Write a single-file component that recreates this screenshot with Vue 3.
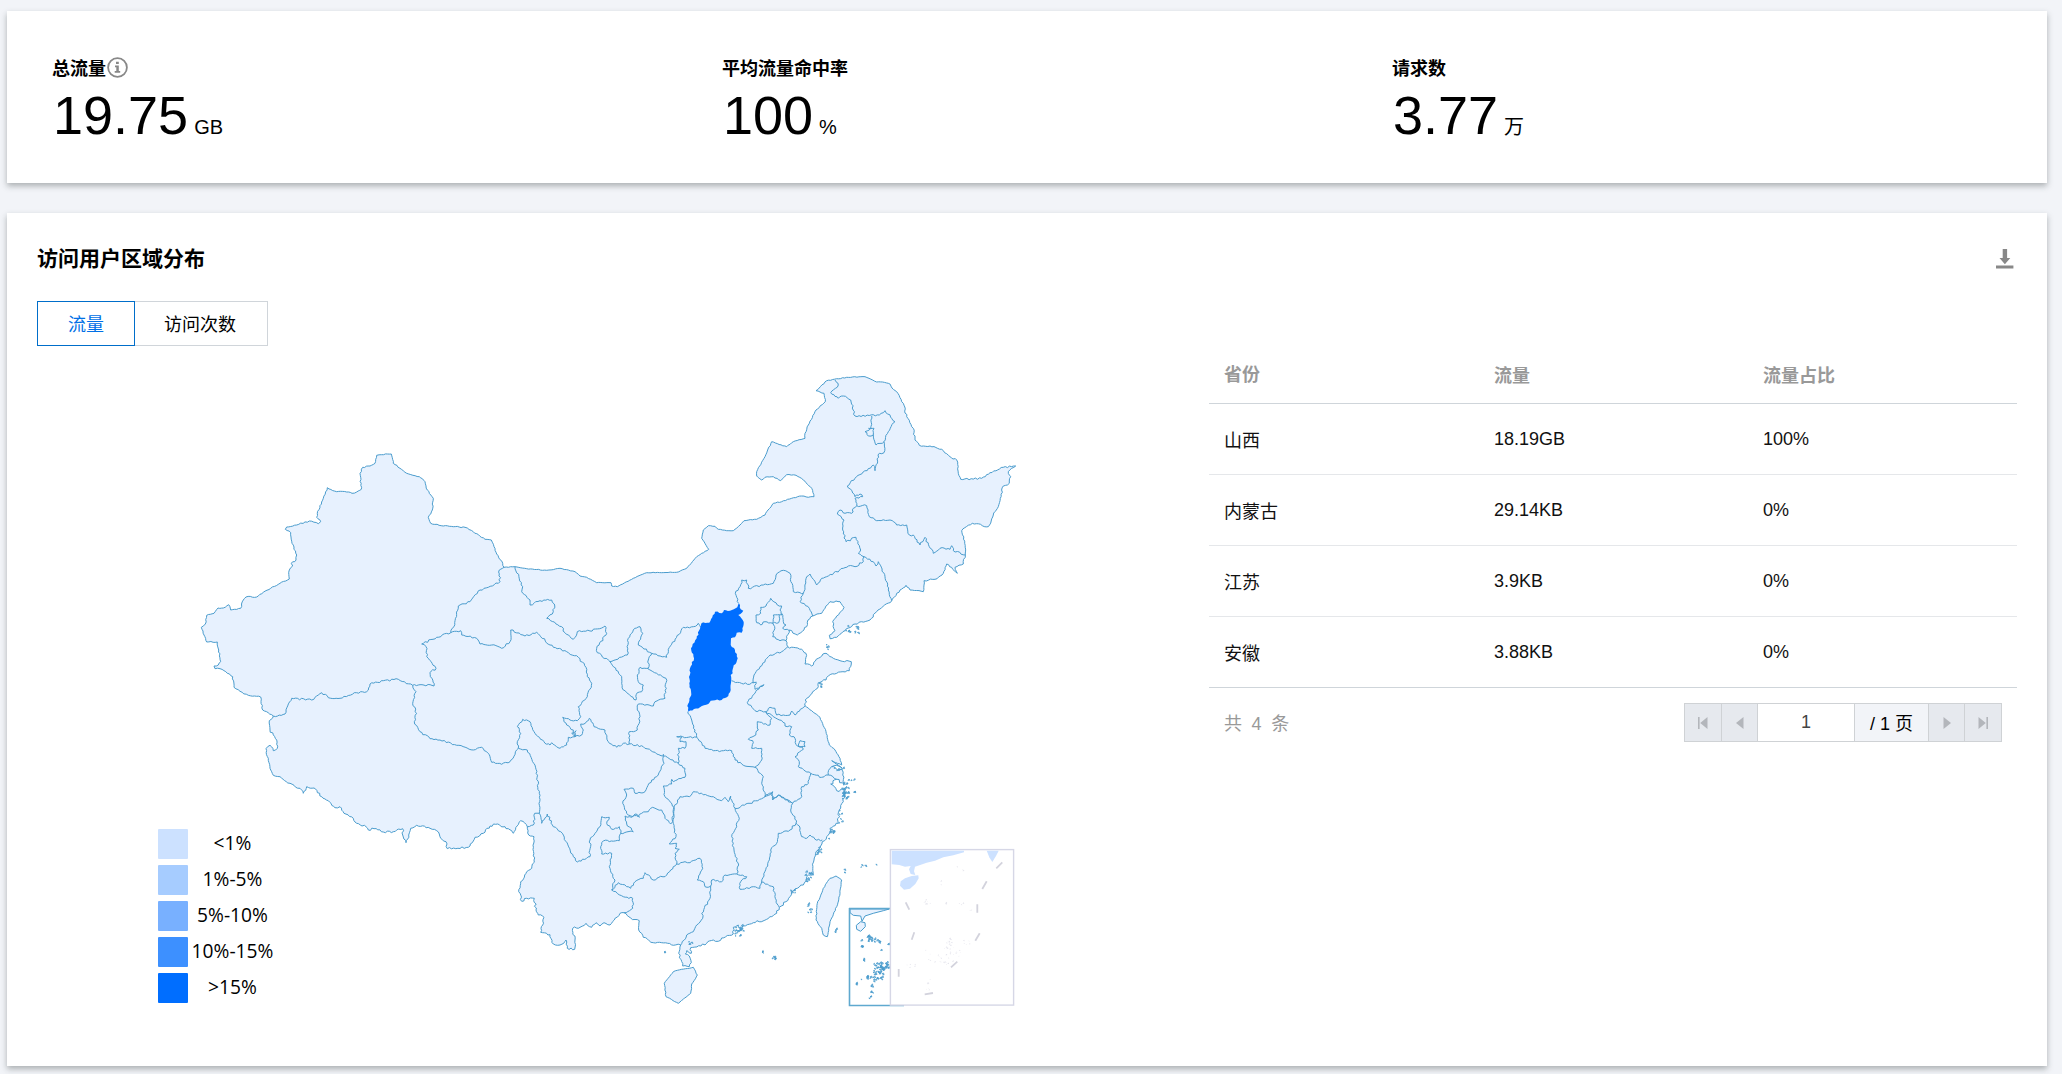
<script setup>
const stats = [
  { label: '总流量', value: '19.75', unit: 'GB', info: true },
  { label: '平均流量命中率', value: '100', unit: '%' },
  { label: '请求数', value: '3.77', unit: '万' },
]

const rows = [
  ['山西', '18.19GB', '100%'],
  ['内蒙古', '29.14KB', '0%'],
  ['江苏', '3.9KB', '0%'],
  ['安徽', '3.88KB', '0%'],
]

const legend = [
  { label: '<1%', cls: 'l1' },
  { label: '1%-5%', cls: 'l2' },
  { label: '5%-10%', cls: 'l3' },
  { label: '10%-15%', cls: 'l4' },
  { label: '>15%', cls: 'l5' },
]

// Map sheets: origin of each sheet on the canvas, three sheet units per pixel.
const sheets = {
  W: [190, 430],
  N: [500, 430],
  NE: [740, 360],
  S: [500, 680],
  E: [740, 620],
}

function points(sheet, text) {
  const [ox, oy] = sheets[sheet]
  return text.trim().split(/\s+/).map((p) => {
    const [x, y] = p.split(',').map(Number)
    return [ox + x / 3, oy + y / 3]
  })
}

let seed = 7
function rand() {
  seed = (seed * 16807) % 2147483647
  return seed / 2147483647
}

// Adds small irregularities between surveyed points.
function rough(pts, amount) {
  const out = [pts[0]]
  for (let i = 1; i < pts.length; i++) {
    const [ax, ay] = pts[i - 1]
    const [bx, by] = pts[i]
    const len = Math.hypot(bx - ax, by - ay)
    const n = Math.max(1, Math.round(len / 2.1))
    for (let k = 1; k < n; k++) {
      const t = k / n
      const d = (rand() - 0.5) * 2 * amount
      out.push([ax + (bx - ax) * t - ((by - ay) / len) * d, ay + (by - ay) * t + ((bx - ax) / len) * d])
    }
    out.push([bx, by])
  }
  return out
}

function path(pts, close) {
  return 'M' + pts.map(([x, y]) => x.toFixed(1) + ' ' + y.toFixed(1)).join('L') + (close ? 'Z' : '')
}

const coast = [
  ['W', 0.6, '942,412 938,400 920,372 912,350 904,330 885,328 850,305 825,292 790,290 760,288 722,280 715,262 727,240 730,205 712,180 705,155 688,140 650,130 630,115 610,100 604,72 575,74 560,76 555,100 540,108 518,112 510,130 514,178 500,186 486,190 470,186 440,185 412,173 400,205 382,250 380,262 392,275 385,281 358,273 320,285 290,291 286,298 302,308 306,340 320,375 318,390 304,400 308,408 298,420 298,447 270,460 220,487 200,501 168,501 160,510 152,535 122,540 116,524 100,534 84,534 72,550 50,556 46,582 34,592 42,615 50,636 82,636 86,660 92,695 85,705 72,708 75,716 90,716 112,730 128,740 132,772 150,784 175,796 212,801 218,840 250,858'],
  ['W', 1, '250,858 238,872 240,900 256,925 262,955 250,962 240,946 228,956 235,985 240,1015 250,1036 270,1040 300,1060 330,1075 340,1090 350,1070 372,1074 395,1100 415,1112 435,1133 450,1130 462,1150 490,1165 500,1180 528,1190 535,1200 552,1196 580,1206 610,1205 638,1196 638,1215 648,1238 656,1215 662,1195 680,1186 720,1195 740,1202 748,1212 752,1225 768,1235 772,1256 835,1252 855,1222 880,1210 900,1188 917,1183 945,1190 968,1208'],
  ['S', 1.1, '40,460 62,422 82,440 86,465 102,470 102,540 95,565 80,575 62,605 56,635 65,664 80,655 103,655 108,690 115,705 132,712 128,735 122,757 150,764 160,792 180,795 198,780 202,805 224,808 225,780 218,745 240,742 258,730 275,742 288,728 300,738 312,728 330,735 360,700 372,698 392,714 418,722 416,750 430,772 460,788 485,788 520,796 542,795 536,820 548,858 568,860 574,848 568,828 556,822 560,812 574,820 572,803 620,790 640,780 655,784 665,774 700,762 700,742 715,735 722,750 730,738 760,728 800,718 830,700 838,682'],
  ['E', 1.3, '118,862 150,830 160,812 190,795 200,770 218,765 222,720 228,695 240,685 247,665 265,645 270,625 295,610 298,570 310,545 315,520 310,508 290,512 272,492 290,478 312,492 308,465 308,452 275,440'],
  ['E', 0.4, '275,440 290,436 306,444 275,422 305,435 300,415 285,390 268,375 258,335 240,292 215,272 195,257'],
  ['E', 1, '195,257 200,235 218,215 235,200 235,188 258,180 265,168 290,160 328,152 334,125 300,122 280,115 255,100 235,115 215,138 195,132 198,100 185,88 143,80'],
  ['NE', 0.8, '143,860 138,842 148,810 172,825 200,800 204,780 218,768 245,760 270,725 300,725 312,742 290,768 278,785 285,812 268,826 270,836 290,832 315,812 345,792 390,780 410,755 455,722 480,690 498,676 510,690 550,695 552,662 585,658 610,640 620,612 638,628 652,640 645,622 670,612 676,585 674,550 665,512 697,490 745,500 760,465 775,440 790,378 808,370 812,350 805,335 815,325 827,318 790,322 750,338 725,355 662,358 655,340 650,300 630,290 605,268 570,258 538,256 525,240 520,205 500,170 490,130 470,95 445,70 410,66'],
  ['NE', 0.4, '410,66 375,50 320,52 260,62 228,92 252,100 256,125 228,150 205,195 195,220 195,235 160,245 140,260 95,245 75,290 50,335 50,348 65,360 75,352 100,350 122,362 140,344 168,346 190,360 215,385 222,410 205,412 185,408 155,415 125,425 100,430 80,455 75,465 50,478 12,482 0,495'],
  ['N', 0.3, '720,285 700,302 680,302 655,298 645,289 625,287 610,300 605,325 626,358 590,380 560,415 530,427 440,428 400,445 352,470 335,468 333,458 290,458 260,442 240,438 225,425 180,415 140,421 80,416 45,410 12,412'],
]

const mainland = path(coast.flatMap(([s, a, t]) => rough(points(s, t), a)), true)

const borders = [
  ['W', '942,412 928,420 930,455 895,472 870,480 840,515 805,528 792,590 782,608'],
  ['W', '782,608 740,622 695,642 708,650 710,680 738,715 720,728 732,768 690,764 668,766'],
  ['W', '668,766 625,748 580,752 540,762 530,785 500,788 450,805 415,803 395,788 365,810 305,805 285,852 250,858'],
  ['W', '668,766 678,785 668,820 680,850 673,875 690,905 720,926 750,930 800,946 850,960 875,952 900,980 905,997 935,1003 960,995 985,955'],
  ['W', '782,608 812,602 815,615 860,625 870,642 905,645 935,655 960,635 962,600'],
  ['S', '55,205 82,210 108,268 118,340 118,400 104,400 100,435 82,440'],
  ['N', '32,600 75,618 110,607 150,645 200,665 235,682 258,712 262,740 275,760 262,800 235,830 242,860'],
  ['S', '242,110 232,122 210,120 188,112 200,135 220,150 225,170'],
  ['S', '55,205 52,185 62,160 52,140 68,118 90,125 105,160 135,190 150,195 155,188 180,205 200,195 205,172 225,170'],
  ['S', '225,170 215,160 228,152 225,170 245,165 250,150 242,132 256,130 268,115 282,140 315,150 325,185 350,202 370,190 388,192'],
  ['N', '45,410 68,470 65,485 90,510 90,525 120,512 155,510 163,522 160,545 140,565 185,590 195,608 220,628 232,605 270,603 315,588 320,610 290,655 292,668 330,695'],
  ['N', '330,695 382,675 385,625 400,600 420,590 428,610 415,645 455,670 445,690 445,715 420,712 412,735 415,755 430,765 425,785 412,788 408,810 370,780 365,740 330,695'],
  ['N', '455,670 500,682 505,658 550,592 580,590 595,580 602,592 610,578'],
  ['N', '442,715 470,730 498,745 495,805 465,815 460,828 415,822'],
  ['S', '415,72 412,90 420,110 412,150 388,155 388,192 430,200 470,222 490,228 535,250'],
  ['S', '490,222 492,250 470,290 455,300 435,335 405,340 400,325 372,328 380,345 368,370 385,405 415,410'],
  ['S', '535,250 555,265 555,292 520,305 515,298 515,312 490,318 495,350 522,382'],
  ['S', '415,410 425,400 445,395 458,382 485,390 495,415 512,432 518,425 522,382'],
  ['S', '420,412 405,402 395,412 375,408 380,432 400,455 362,460'],
  ['S', '118,400 125,430 142,402 160,440 182,455 220,530 232,546 270,530 270,480 300,440 305,410 328,412 320,430 335,448 358,440 362,460'],
  ['S', '362,460 358,482 310,483 302,500 305,522 335,520 328,560 345,600 335,630'],
  ['S', '335,630 355,608 392,625 405,605 430,595 435,578 460,600 500,585 530,552'],
  ['S', '335,630 370,650 398,655 398,685 372,698'],
  ['S', '522,382 520,430 528,470 508,492 530,490 525,505 538,508 525,520 530,552'],
  ['S', '530,552 555,545 570,548 600,535 608,565 592,600 610,605 615,620 632,618'],
  ['S', '632,618 630,655 605,700 608,715 590,735 580,755 560,765 542,795'],
  ['S', '632,618 635,600 665,605 675,585 710,582'],
  ['S', '710,582 716,555 702,510 695,470 718,415 705,385'],
  ['S', '522,382 540,350 568,350 580,335 640,350 665,362 675,352 685,365 692,348 705,385'],
  ['S', '705,385 750,370 795,350 815,338 818,360 835,345 878,370'],
  ['S', '710,582 740,590 722,605 720,628 760,620 780,625 785,606 805,545 812,510 830,490 835,460 870,450 888,430'],
  ['S', '785,606 820,620 826,655 838,682'],
  ['S', '535,250 535,205 555,205 558,185 540,185 545,172 530,170 590,172 585,150 575,120 563,95'],
  ['S', '590,172 615,205 640,212 695,212 705,240 735,258 765,262 790,290 785,310 795,350'],
  ['S', '765,262 785,240 785,205 755,205 758,182 745,178 762,168 775,150 772,125 810,135 815,115 797,95'],
  ['S', '797,95 765,92 742,68 765,40 770,30 792,14 765,28 768,5'],
  ['N', '695,752 730,762 768,758'],
  ['E', '143,80 125,95 90,105 60,140 42,165 40,190'],
  ['E', '77,275 90,262 105,265 110,285 150,285 155,273 165,285 195,257'],
  ['E', '77,275 100,290 135,310 135,318 155,320 148,345 162,350 172,378 195,380 195,365 180,362 175,375 190,388 165,410 178,425 175,440 212,460'],
  ['E', '212,460 205,490 185,500 185,530 158,550 152,570 165,590 168,610'],
  ['E', '75,530 88,520 98,515 100,538 115,525 158,550'],
  ['E', '212,460 245,472 265,465 290,478'],
  ['E', '265,465 270,445 275,440'],
  ['E', '168,610 178,618 185,650 200,655 210,645 225,658 247,660'],
  ['N', '716,520 706,490 720,470 725,450 740,450 745,475 790,465 820,460 828,435 850,421 870,430 880,485 900,488'],
  ['NE', '180,698 190,700 180,725 208,745 218,768'],
  ['NE', '190,700 200,650 210,642 230,675 245,655 260,650 310,625 325,618 345,620 370,605 372,590'],
  ['NE', '372,590 355,580 362,570 348,532 318,545 308,510 312,480 292,462 300,450 315,460 335,460 340,445 350,437'],
  ['NE', '372,590 400,605 408,618 415,605 435,650 445,690 455,722'],
  ['NE', '350,437 380,437 388,470 410,482 450,480 470,495 500,495 508,525 520,525 540,555 555,532 568,560 580,580 600,565 630,568 635,557 640,572 676,585'],
  ['NE', '350,437 345,415 368,410 360,402 345,410 322,378 345,355 400,315 405,332 418,280 432,278 432,245 445,215 465,185 435,152 418,165 345,168 332,120 310,108 295,115 272,98 295,75 285,60'],
  ['NE', '395,168 392,205 375,215 385,228 400,225 402,205 385,205'],
  ['NE', '400,225 408,255 432,245'],
  ['NE', '92,715 112,735 125,738 120,750 125,765 100,765 98,790 75,785 62,795 50,788 48,765 62,760 62,742 78,738 92,715'],
  ['NE', '125,760 130,785 138,795 128,805 148,812'],
  ['NE', '98,790 104,800 98,830 120,842 138,842'],
  ['NE', '118,765 116,788 98,790'],
].map(([s, t]) => path(rough(points(s, t), 0.95)))

const shanxi = path(rough(points('N', '716,520 722,538 730,542 715,555 728,570 731,582 725,608 710,608 705,622 693,625 692,645 705,660 713,685 700,712 698,730 692,735 692,780 685,798 665,810 632,812 625,822 600,832 565,845 562,828 574,795 568,760 570,715 582,685 573,655 590,625 605,580 628,578 645,545 665,550 672,540 690,542 712,532'), 0.7), true)

const islands = [
  ['S', '520,875 545,868 580,862 592,885 575,912 572,940 550,958 535,970 498,950 493,910 520,875'],
  ['E', '288,768 305,780 300,820 290,860 270,905 262,950 250,945 245,925 228,900 232,850 250,805 270,775 288,768'],
].map(([s, t]) => path(rough(points(s, t), 0.4), true))

const insetLand = path(points('E', '330,867 448,867 430,872 400,880 375,888 366,904 362,888 340,886 330,878'), true)
const insetIsle = path(points('E', '362,905 375,908 376,920 362,934 350,928 349,916'), true)

// Small islets: centre, spread and count in sheet E units.
const islets = [
  [313, 515, 11, 24, 30], [300, 590, 6, 20, 6], [272, 640, 8, 18, 8], [232, 695, 10, 12, 8], [205, 770, 12, 14, 12],
  [158, 815, 9, 5, 6], [208, 865, 6, 14, 6], [287, 925, 3, 22, 3], [332, 482, 9, 3, 3], [342, 518, 3, 4, 2],
  [259, 80, 4, 12, 4], [335, 28, 20, 12, 12], [368, 740, 8, 6, 3], [407, 735, 2, 3, 1], [310, 755, 3, 8, 2],
  [-5, 928, 14, 12, 14], [-8, 945, 10, 4, 4], [-150, 968, 6, 5, 4], [67, 997, 3, 4, 3], [100, 1014, 5, 5, 6], [-226, 996, 2, 3, 2],
  [240, 195, 6, 7, 4], [295, 448, 14, 6, 6],
  [388, 956, 9, 8, 14], [410, 965, 10, 6, 6], [444, 974, 3, 3, 2], [421, 990, 2, 2, 1], [413, 1055, 14, 28, 50], [435, 1040, 10, 12, 14],
  [376, 1072, 16, 6, 9], [392, 1108, 5, 12, 6], [389, 1132, 4, 3, 3], [363, 973, 3, 10, 5], [369, 1020, 2, 7, 3], [348, 1092, 2, 7, 3],
]
function scatter(list, size) {
  return list.flatMap(([cx, cy, rx, ry, n]) =>
    Array.from({ length: n }, () => {
      const x = 740 + (cx + (rand() * 2 - 1) * rx) / 3
      const y = 620 + (cy + (rand() * 2 - 1) * ry) / 3
      const a = size * (0.6 + rand())
      return `M${x.toFixed(1)} ${y.toFixed(1)}l${a.toFixed(1)} ${(-a * rand() * 1.5).toFixed(1)}l${(a * 0.3).toFixed(1)} ${a.toFixed(1)}z`
    })
  ).join('')
}
const isletPath = scatter(islets, 1.1)

const faintPath = scatter([
  [560, 846, 10, 8, 9], [615, 853, 8, 4, 4], [662, 852, 8, 3, 4], [690, 870, 4, 3, 3], [652, 742, 3, 3, 3],
  [620, 965, 16, 14, 10], [635, 995, 25, 15, 14], [680, 968, 12, 6, 5], [600, 1010, 45, 18, 14], [510, 1036, 14, 6, 5],
  [612, 1030, 10, 5, 6], [568, 1085, 8, 8, 4], [562, 1110, 5, 5, 3], [668, 750, 3, 5, 2], [602, 785, 3, 12, 2],
], 1)

const panelLand = path(points('E', '455,692 672,692 672,697 640,706 610,712 585,722 560,728 525,740 522,754 526,765 512,762 507,748 512,738 495,740 478,735 455,733'), true)
const panelIsle = path(points('E', '495,775 515,768 535,766 536,775 526,792 510,806 492,809 480,797 482,784'), true)
const panelTaiwan = path(points('E', '740,692 776,692 768,708 757,726 748,712'), true)
const dashes = [
  '769,745 787,727', '727,807 740,784', '712,853 712,878', '706,962 719,940', '633,1042 652,1025',
  '554,1123 579,1119', '476,1047 476,1070', '515,959 523,937', '497,847 508,869',
].map((t) => path(points('E', t))).join('')
</script>

<template>
  <main class="page">
    <section class="card stats">
      <div v-for="s in stats" :key="s.label" class="stat">
        <div class="stat-label">
          {{ s.label }}
          <svg v-if="s.info" class="info" viewBox="0 0 21 21">
            <circle cx="10.5" cy="10.5" r="9.4" fill="none" stroke="#888" stroke-width="1.8" />
            <path d="M9 4.7h2.8v2.2H9zM8 8.6h3.8v5.4h1.4v1.7H7.7V14H9.3v-3.8H8z" fill="#888" />
          </svg>
        </div>
        <div class="stat-value">{{ s.value }}<span class="unit">{{ s.unit }}</span></div>
      </div>
    </section>

    <section class="card region">
      <header class="head">
        <h2>访问用户区域分布</h2>
        <svg class="download" viewBox="0 0 18 20">
          <path d="M6.7 0h4.4v9h3.2L8.9 15.2 3.5 9h3.2zM0 16.4h17.4v3.2H0z" fill="#888" />
        </svg>
      </header>
      <div class="tabs">
        <button class="tab active">流量</button>
        <button class="tab second">访问次数</button>
      </div>

      <div class="body">
        <div class="map-box">
          <svg class="map" viewBox="37 346 1100 700">
            <g class="land">
              <path :d="mainland" />
              <path v-for="(d, i) in islands" :key="'i' + i" :d="d" />
              <path :d="insetLand" />
              <path :d="insetIsle" />
            </g>
            <path v-for="(d, i) in borders" :key="i" :d="d" class="border" />
            <path :d="isletPath" class="islets" />
            <path :d="shanxi" class="hot" />
            <path d="M849 908.5H892M849.5 908V1005.5H904" class="inset" />
            <rect x="890.4" y="849.6" width="123.2" height="155.5" class="panel" />
            <g fill="#cce1ff">
              <path :d="panelLand" />
              <path :d="panelIsle" />
              <path :d="panelTaiwan" />
            </g>
            <path :d="faintPath" fill="#e4e4ec" />
            <path :d="dashes" class="dash" />
          </svg>
          <ul class="legend">
            <li v-for="l in legend" :key="l.label"><i :class="l.cls"></i><span>{{ l.label }}</span></li>
          </ul>
        </div>

        <div class="table-box">
          <div class="row th"><span>省份</span><span>流量</span><span>流量占比</span></div>
          <div v-for="r in rows" :key="r[0]" class="row">
            <span v-for="(c, i) in r" :key="i">{{ c }}</span>
          </div>
          <div class="foot">
            <span class="total">共 4 条</span>
            <div class="pager">
              <span class="pg btn"><svg viewBox="0 0 12 12"><path d="M1 0h1.6v12H1zM10.5 0v12L3.2 6z" /></svg></span>
              <span class="pg btn"><svg viewBox="0 0 12 12"><path d="M9.5 0v12L2 6z" /></svg></span>
              <span class="pg num">1</span>
              <span class="pg of">/ 1 页</span>
              <span class="pg btn"><svg viewBox="0 0 12 12"><path d="M2.5 0v12L10 6z" /></svg></span>
              <span class="pg btn"><svg viewBox="0 0 12 12"><path d="M9.4 0H11v12H9.4zM1.5 0v12L8.8 6z" /></svg></span>
            </div>
          </div>
        </div>
      </div>
    </section>
  </main>
</template>

<style>
body {
  background: #f2f4f8;
}
</style>

<style scoped>
* {
  box-sizing: border-box;
}
.page {
  height: 1074px;
  padding: 11px 15px 8px 7px;
  overflow: hidden;
  background: #f2f4f8;
  font-family: "Liberation Sans", "Noto Sans CJK SC", sans-serif;
  font-size: 18px;
  color: #000;
}
.card {
  background: #fff;
  box-shadow: 0 3px 6px rgba(40, 50, 50, 0.35);
}
.stats {
  display: flex;
  height: 172px;
  padding: 42px 0 0 45px;
}
.stat {
  flex: 0 0 670px;
}
.stat:last-child {
  flex-basis: 600px;
}
.stat-label {
  display: flex;
  align-items: center;
  height: 28px;
  font-weight: 700;
}
.info {
  width: 21px;
  height: 21px;
  margin-left: 1px;
}
.stat-value {
  height: 67px;
  padding-left: 1px;
  line-height: 68px;
  font-size: 54px;
  white-space: nowrap;
}
.unit {
  margin-left: 6px;
  font-size: 20px;
}
.region {
  height: 853px;
  margin-top: 30px;
  padding: 32px 30px 0;
}
.head {
  display: flex;
  justify-content: space-between;
  align-items: center;
  height: 28px;
}
h2 {
  margin: 0;
  font-size: 21px;
  line-height: 28px;
}
.download {
  width: 18px;
  height: 20px;
  margin-right: 3px;
}
.tabs {
  display: flex;
  margin-top: 28px;
}
.tab {
  width: 98px;
  height: 45px;
  padding: 0 0 2px;
  border: 1px solid #d0d5da;
  background: #fff;
  color: #000;
  font: inherit;
}
.tab.active {
  border-color: #006eca;
  color: #0070e6;
}
.tab.second {
  width: 133px;
  padding-right: 2px;
  border-left: 0;
}
.body {
  display: flex;
  justify-content: space-between;
}
.map-box {
  position: relative;
  width: 1100px;
}
.map {
  display: block;
  width: 1100px;
  height: 700px;
}
.land path {
  fill: #e7f1fe;
  stroke: #4a9ccd;
  stroke-width: 1;
}
.border {
  fill: none;
  stroke: #4a9ccd;
  stroke-width: 1;
}
.islets {
  fill: #a9cfe6;
  stroke: #4a9ccd;
  stroke-width: 0.8;
}
.hot {
  fill: #006eff;
}
.inset {
  fill: none;
  stroke: #5fa9cf;
  stroke-width: 1.6;
}
.panel {
  fill: #fff;
  stroke: #d6d7e6;
  stroke-width: 1.4;
}
.dash {
  fill: none;
  stroke: #d3d3dd;
  stroke-width: 1.8;
}
.legend {
  position: absolute;
  left: 121px;
  top: 483px;
  margin: 0;
  padding: 0;
  display: flex;
  flex-direction: column;
  gap: 6px;
  list-style: none;
  font-family: "Open Sans", "Noto Sans", sans-serif;
  font-size: 19.2px;
}
.legend li {
  display: flex;
  height: 30px;
}
.legend i {
  width: 30px;
  border-radius: 1px;
}
.legend span {
  width: 89px;
  line-height: 27px;
  text-align: center;
}
.l1 { background: #cce1ff; }
.l2 { background: #a6ccff; }
.l3 { background: #78b0ff; }
.l4 { background: #3d90ff; }
.l5 { background: #006eff; }
.table-box {
  width: 808px;
}
.row {
  display: grid;
  grid-template-columns: repeat(3, 269px);
  align-items: center;
  height: 71px;
  padding-left: 16px;
  border-bottom: 1px solid #e5e7ea;
  color: #111;
}
.row span:first-child {
  margin-left: -1px;
  padding-bottom: 1px;
}
.row:nth-child(5) {
  border-bottom-color: #cfd5da;
}
.th {
  height: 58px;
  padding-bottom: 2px;
  border-bottom-color: #cfd5da;
  font-weight: 700;
  color: #999;
}
.foot {
  display: flex;
  justify-content: space-between;
  align-items: center;
  padding: 15px 15px 0;
}
.total {
  padding-bottom: 1px;
  color: #999;
  letter-spacing: 0.5px;
  word-spacing: 3.6px;
}
.pager {
  display: flex;
  height: 39px;
  border: 1px solid #cfd2d5;
}
.pg {
  display: flex;
  align-items: center;
  justify-content: center;
  border-left: 1px solid #cfd2d5;
}
.pg:first-child {
  width: 36px;
  border-left: 0;
}
.btn {
  width: 37px;
  background: #e6e9ee;
}
.btn:nth-child(2),
.btn:nth-child(5) {
  width: 36px;
}
.btn svg {
  width: 12px;
  height: 12px;
  fill: #b3b6bb;
}
.num {
  width: 97px;
  color: #444;
}
.of {
  width: 74px;
  padding-bottom: 2px;
  background: #f2f4f8;
}
</style>
